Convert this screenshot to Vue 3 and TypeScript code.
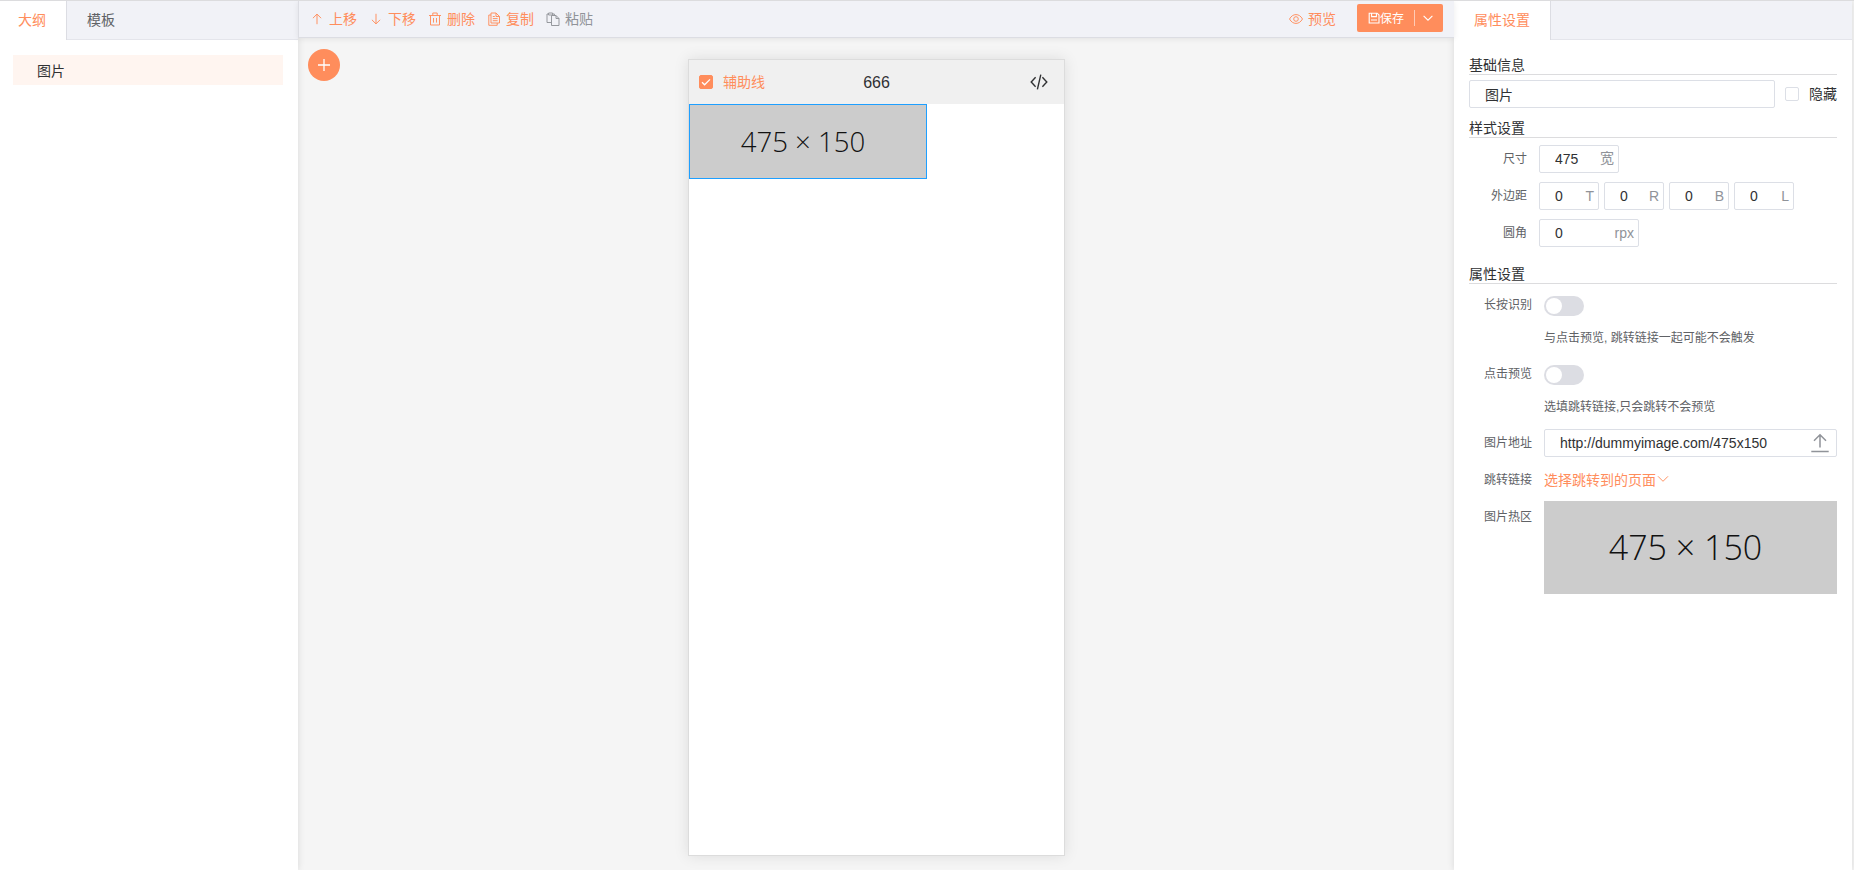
<script setup lang="ts">
import { ref } from 'vue'

interface Action {
  name: string
  label: string
  paths: string[]
  muted?: boolean
}

const actions: Action[] = [
  { name: 'up', label: '上移', paths: ['M7 12.2V2.2M2.9 6.2L7 2.1l4.1 4.1'] },
  { name: 'down', label: '下移', paths: ['M7 1.8v10M2.9 7.8L7 11.9l4.1-4.1'] },
  { name: 'remove', label: '删除', paths: ['M1 3.5h12M2.5 3.5v9.5h9V3.5M4.8 3.3V1h4.4v2.3M5.5 6v4.6M8.5 6v4.6'] },
  {
    name: 'copy',
    label: '复制',
    paths: ['M4 1h5l3.5 3.5V11H4zM9 1v3.5h3.5M4 3H1.8v10.3h8.4V11M5.8 4.5h2M5.8 6.6h4.8M5.8 8.7h4.8'],
  },
  {
    name: 'paste',
    label: '粘贴',
    paths: ['M5.5 3.5H10l3 3v7H5.5zM10 3.5v3h3M5.3 10.5H1V2h1.6M6.6 2h1.8v1.5M2.6 1h4v2h-4z'],
    muted: true,
  },
]

const name = ref('图片')
const width = ref('475')
const margins = ref([
  { side: 'T', value: '0' },
  { side: 'R', value: '0' },
  { side: 'B', value: '0' },
  { side: 'L', value: '0' },
])
const radius = ref('0')
const url = ref('http://dummyimage.com/475x150')
</script>

<template>
  <div class="editor">
    <aside class="outline">
      <nav class="tabs">
        <span class="tab active">大纲</span>
        <span class="tab">模板</span>
      </nav>
      <div class="node">图片</div>
    </aside>

    <main class="stage">
      <header class="toolbar">
        <div class="actions">
          <a v-for="a in actions" :key="a.name" class="action" :class="{ muted: a.muted }">
            <svg width="14" height="14" viewBox="0 0 14 14"><path v-for="p in a.paths" :key="p" :d="p" /></svg>
            <span>{{ a.label }}</span>
          </a>
        </div>
        <a class="action preview">
          <svg width="14" height="14" viewBox="0 0 14 14">
            <path d="M.5 7C2.2 4 4.4 2.6 7 2.6S11.8 4 13.5 7C11.8 10 9.6 11.4 7 11.4S2.2 10 .5 7z" />
            <circle cx="7" cy="7" r="2.3" />
          </svg>
          <span>预览</span>
        </a>
        <div class="save">
          <svg width="12" height="12" viewBox="0 0 12 12">
            <path d="M1.2 1.2h8L11 3v8H1.2zM3.6 1.2v3.4h4.8V1.2M3 8h6" />
          </svg>
          <span class="save-text">保存</span>
          <i class="divider"></i>
          <svg class="caret" width="12" height="12" viewBox="0 0 12 12"><path d="M1.6 3.8L6 8.2l4.400-4.400" /></svg>
        </div>
      </header>

      <div class="canvas">
        <button class="add" type="button">
          <svg width="14" height="14" viewBox="0 0 14 14"><path d="M7 1v12M1 7h12" /></svg>
        </button>
        <section class="phone">
          <div class="phone-head">
            <label class="guides">
              <span class="check on">
                <svg width="12" height="12" viewBox="0 0 12 12"><path d="M2 6.200l2.600 2.600 5.400-5.400" /></svg>
              </span>
              <span class="guides-text">辅助线</span>
            </label>
            <span class="title">666</span>
            <svg class="code" width="18" height="16" viewBox="0 0 18 16">
              <path d="M5.6 3.2L1.2 8l4.4 4.8M12.4 3.2L16.8 8l-4.4 4.8M10.8.6L7.4 15.4" />
            </svg>
          </div>
          <div class="dummy selected">475 × 150</div>
        </section>
      </div>
    </main>

    <aside class="props">
      <nav class="tabs">
        <span class="tab active">属性设置</span>
      </nav>
      <div class="form">
        <h3>基础信息</h3>
        <div class="name-row">
          <div class="field grow"><input v-model="name" type="text" /></div>
          <span class="check"></span>
          <span class="hide-label">隐藏</span>
        </div>

        <h3>样式设置</h3>
        <div class="styles">
          <div class="row">
            <label>尺寸</label>
            <div class="field size"><input v-model="width" type="text" /><em>宽</em></div>
          </div>
          <div class="row">
            <label>外边距</label>
            <div v-for="m in margins" :key="m.side" class="field side">
              <input v-model="m.value" type="text" /><em>{{ m.side }}</em>
            </div>
          </div>
          <div class="row">
            <label>圆角</label>
            <div class="field radius"><input v-model="radius" type="text" /><em>rpx</em></div>
          </div>
        </div>

        <h3>属性设置</h3>
        <div class="attrs">
          <label>长按识别</label>
          <div class="toggle">
            <span class="switch"></span>
            <p>与点击预览, 跳转链接一起可能不会触发</p>
          </div>
          <label>点击预览</label>
          <div class="toggle">
            <span class="switch"></span>
            <p>选填跳转链接,只会跳转不会预览</p>
          </div>
          <label>图片地址</label>
          <div class="field url">
            <input v-model="url" type="text" />
            <svg width="18" height="20" viewBox="0 0 18 20"><path d="M9 14.5V2M3 7.700L9 1.700l6 6M.3 18.400h17.400" /></svg>
          </div>
          <label>跳转链接</label>
          <a class="link">
            选择跳转到的页面<svg width="14" height="14" viewBox="0 0 14 14"><path d="M2 4.300l5 5 5-5" /></svg>
          </a>
          <label class="hot-label">图片热区</label>
          <div class="dummy hotzone">475 × 150</div>
        </div>
      </div>
    </aside>
  </div>
</template>

<style>
body {
  margin: 0;
  overflow: hidden;
}
</style>

<style scoped>
* {
  box-sizing: border-box;
}
.editor {
  display: flex;
  width: 1854px;
  height: 870px;
  padding-right: 2px;
  border-top: 1px solid #dcdcde;
  background: #f5f5f5;
  font-family: 'Liberation Sans', 'Noto Sans CJK SC', sans-serif;
  font-size: 14px;
  color: #303133;
  overflow: hidden;
}
svg {
  display: block;
  flex: none;
  fill: none;
  stroke: currentColor;
  stroke-width: 0.95;
}
.outline,
.props {
  position: relative;
  z-index: 1;
  flex: none;
  background: #fff;
  box-shadow: 0 0 7px rgba(0, 0, 0, 0.12);
}
.outline {
  width: 298px;
}
.props {
  width: 398px;
}
.tabs {
  display: flex;
  height: 39px;
  background: #f1f2f7;
  border-bottom: 1px solid #e4e5eb;
}
.tab {
  height: 39px;
  padding: 0 20px;
  line-height: 39px;
  color: #606266;
}
.tab.active {
  background: #fff;
  border-right: 1px solid #dcdde3;
  color: #ff8d5c;
}
.outline .tab.active {
  padding: 0 20px 0 18px;
}
.node {
  height: 30px;
  margin: 15px 15px 0 13px;
  padding-left: 24px;
  line-height: 32px;
  background: #fff5f0;
}
.stage {
  flex: 1;
  display: flex;
  flex-direction: column;
  min-width: 0;
}
.toolbar {
  position: relative;
  z-index: 2;
  display: flex;
  align-items: flex-start;
  height: 37px;
  padding: 3px 11px 0 11px;
  background: #f1f2f7;
  border-left: 1px solid #dcdde3;
  border-bottom: 1px solid #dcdde3;
  box-shadow: 0 1px 6px rgba(0, 0, 0, 0.08);
}
.actions {
  display: flex;
  gap: 12px;
  flex: 1;
}
.action {
  display: flex;
  align-items: center;
  gap: 5px;
  height: 30px;
  color: #ff8d5c;
}
.action span {
  padding-bottom: 2px;
}
.action.muted {
  color: #909399;
}
.preview {
  margin-right: 21px;
}
.save {
  display: flex;
  align-items: center;
  width: 86px;
  height: 28px;
  padding-left: 11px;
  border-radius: 2px;
  background: #ff8d5c;
  color: #fff;
  font-size: 12px;
}
.save svg {
  stroke-width: 1.1;
}
.save-text {
  margin-top: -2px;
}
.divider {
  width: 1px;
  height: 16px;
  margin: 0 7px 0 10px;
  background: rgba(255, 255, 255, 0.55);
}
.canvas {
  position: relative;
  flex: 1;
  background: #f5f5f5;
}
.add {
  position: absolute;
  left: 10px;
  top: 11px;
  display: flex;
  align-items: center;
  justify-content: center;
  width: 32px;
  height: 32px;
  padding: 0;
  border: 0;
  border-radius: 50%;
  background: #ff8d5c;
  color: #fff;
}
.add svg {
  stroke-width: 1.3;
}
.phone {
  width: 377px;
  height: 797px;
  margin: 21px 0 0 390px;
  border: 1px solid #dcdcdc;
  background: #fff;
  box-shadow: 0 0 14px rgba(0, 0, 0, 0.1);
}
.phone-head {
  display: grid;
  grid-template-columns: 1fr auto 1fr;
  align-items: center;
  height: 44px;
  padding: 0 16px 0 10px;
  background: #f0f0f0;
}
.guides {
  display: flex;
  align-items: center;
  gap: 10px;
  color: #ff8d5c;
}
.guides-text {
  padding-bottom: 2px;
}
.title {
  margin-left: 6px;
  padding-top: 1px;
  font-size: 16px;
  line-height: 20px;
}
.code {
  justify-self: end;
  stroke-width: 1.4;
}
.check {
  flex: none;
  display: flex;
  align-items: center;
  justify-content: center;
  width: 14px;
  height: 14px;
  border: 1px solid #dcdfe6;
  border-radius: 2px;
  background: #fff;
}
.check.on {
  border-color: #ff8d5c;
  background: #ff8d5c;
  color: #fff;
}
.check.on svg {
  stroke-width: 1.3;
}
.dummy {
  display: flex;
  align-items: center;
  justify-content: center;
  background: #ccc;
  color: #111;
  font-family: 'Open Sans', sans-serif;
  font-weight: 300;
  white-space: nowrap;
}
.selected {
  width: 238px;
  height: 75px;
  padding: 0 10px 2px 0;
  border: 1px solid #1e9fff;
  font-size: 27.6px;
}
.hotzone {
  height: 93px;
  margin-top: -2px;
  padding: 0 10px 1px 0;
  font-size: 34px;
}
.form {
  padding: 15px 15px 0;
}
h3 {
  height: 20px;
  margin: 0;
  border-bottom: 1px solid #dcdcde;
  font-size: 14px;
  font-weight: 400;
  line-height: 20px;
}
.name-row {
  display: flex;
  align-items: center;
  margin: 5px 0 10px;
}
.name-row .check {
  margin: 0 10px;
}
.hide-label {
  line-height: 20px;
}
.field {
  display: flex;
  align-items: center;
  height: 28px;
  padding: 0 4px 0 15px;
  border: 1px solid #dcdfe6;
  border-radius: 2px;
  background: #fff;
}
.field input {
  flex: 1;
  min-width: 0;
  width: 0;
  padding: 0;
  border: 0;
  outline: 0;
  background: none;
  color: #303133;
  font: inherit;
}
.field em {
  color: #909399;
  font-style: normal;
  line-height: 24px;
}
.size em {
  padding-bottom: 2px;
}
.grow {
  flex: 1;
}
.size {
  width: 80px;
}
.side {
  width: 60px;
}
.radius {
  width: 100px;
}
.styles {
  display: flex;
  flex-direction: column;
  gap: 9px;
  padding: 7px 0 17px;
}
.row {
  display: flex;
  gap: 5px;
}
.row label {
  width: 58px;
  margin-right: 7px;
  text-align: right;
}
.form label {
  font-size: 12px;
  line-height: 28px;
  color: #606266;
}
.attrs {
  display: grid;
  grid-template-columns: 63px 293px;
  column-gap: 12px;
  grid-template-rows: 60px 60px 28px 28px 93px;
  row-gap: 9px;
  padding-top: 7px;
}
.attrs label {
  text-align: right;
}
.toggle {
  padding-top: 5px;
}
.toggle p {
  margin: 12px 0 0;
  font-size: 12px;
  line-height: 20px;
  color: #606266;
}
.switch {
  display: flex;
  align-items: center;
  width: 40px;
  height: 20px;
  padding: 0 2px;
  border-radius: 10px;
  background: #dcdde3;
}
.switch::before {
  content: '';
  width: 16px;
  height: 16px;
  border-radius: 50%;
  background: #fff;
}
.url {
  padding-right: 7px;
  color: #909399;
}
.url svg {
  stroke-width: 1.5;
}
.link {
  display: flex;
  align-items: center;
  height: 26px;
  color: #ff8d5c;
}
</style>
